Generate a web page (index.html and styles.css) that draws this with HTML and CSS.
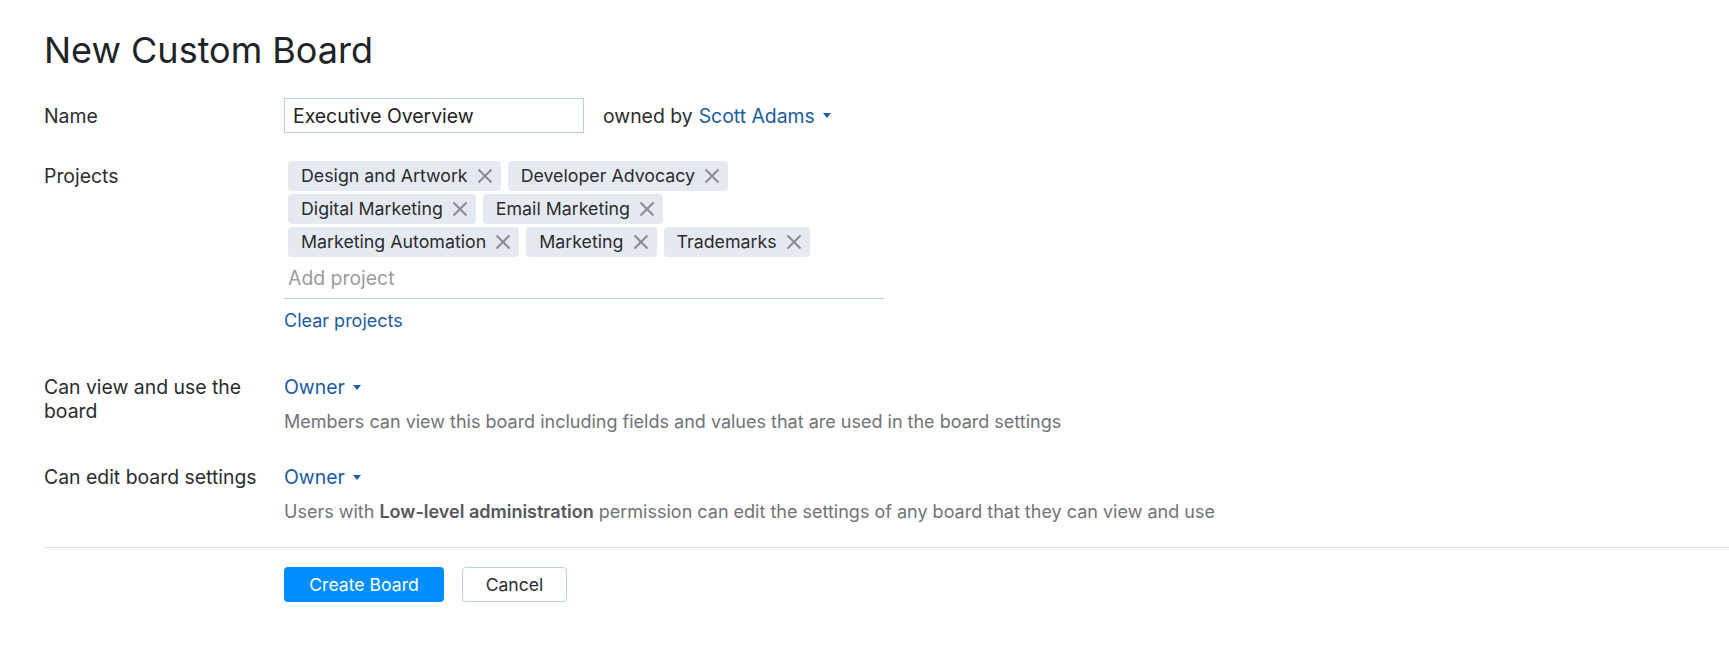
FILE: index.html
```html
<!DOCTYPE html>
<html lang="en">
<head>
    <meta charset="UTF-8">
    <meta name="viewport" content="width=device-width, initial-scale=1.0">
    <title>New Custom Board</title>
    <link rel="stylesheet" href="styles.css">
</head>
<body>

    <div class="page">
        <!-- Header -->
        <h1 class="title">New Custom Board</h1>

        <!-- Form -->
        <div class="form">
            <div class="row row-name">
                <div class="label">Name</div>
                <div class="field field-inline">
                    <input type="text" class="name-input" value="Executive Overview">
                    <span class="owned">owned by</span>
                    <a class="link dropdown">Scott Adams <span class="caret"></span></a>
                </div>
            </div>

            <div class="row row-projects">
                <div class="label">Projects</div>
                <div class="field">
                    <div class="tag-box">
                        <div class="tags">
                            <span class="tag">Design and Artwork <svg class="tag-x" viewBox="0 0 16 16"><path d="M1.5 1.5L14.5 14.5M14.5 1.5L1.5 14.5"/></svg></span>
                            <span class="tag">Developer Advocacy <svg class="tag-x" viewBox="0 0 16 16"><path d="M1.5 1.5L14.5 14.5M14.5 1.5L1.5 14.5"/></svg></span>
                            <span class="tag">Digital Marketing <svg class="tag-x" viewBox="0 0 16 16"><path d="M1.5 1.5L14.5 14.5M14.5 1.5L1.5 14.5"/></svg></span>
                            <span class="tag">Email Marketing <svg class="tag-x" viewBox="0 0 16 16"><path d="M1.5 1.5L14.5 14.5M14.5 1.5L1.5 14.5"/></svg></span>
                            <span class="tag">Marketing Automation <svg class="tag-x" viewBox="0 0 16 16"><path d="M1.5 1.5L14.5 14.5M14.5 1.5L1.5 14.5"/></svg></span>
                            <span class="tag">Marketing <svg class="tag-x" viewBox="0 0 16 16"><path d="M1.5 1.5L14.5 14.5M14.5 1.5L1.5 14.5"/></svg></span>
                            <span class="tag">Trademarks <svg class="tag-x" viewBox="0 0 16 16"><path d="M1.5 1.5L14.5 14.5M14.5 1.5L1.5 14.5"/></svg></span>
                        </div>
                        <input type="text" class="add-project" placeholder="Add project">
                    </div>
                    <a class="link clear-link">Clear projects</a>
                </div>
            </div>

            <div class="row row-view">
                <div class="label">Can view and use the board</div>
                <div class="field">
                    <a class="link dropdown">Owner <span class="caret"></span></a>
                    <div class="hint">Members can view this board including fields and values that are used in the board settings</div>
                </div>
            </div>

            <div class="row row-edit">
                <div class="label">Can edit board settings</div>
                <div class="field">
                    <a class="link dropdown">Owner <span class="caret"></span></a>
                    <div class="hint">Users with <b>Low-level administration</b> permission can edit the settings of any board that they can view and use</div>
                </div>
            </div>
        </div>

        <!-- Buttons -->
        <div class="actions">
            <button class="btn btn-primary">Create Board</button>
            <button class="btn btn-default">Cancel</button>
        </div>
    </div>

</body>
</html>
```

FILE: styles.css
```css
* {
    margin: 0;
    padding: 0;
    box-sizing: border-box;
    font-family: Inter, "Noto Sans", sans-serif;
}
body {
    background-color: #ffffff;
    color: #2a2c30;
    font-size: 19.4px;
    line-height: 24px;
}
.page {
    padding: 28px 0 0 44px;
}
.title {
    font-size: 36px;
    font-weight: 400;
    line-height: normal;
    color: #202327;
}
.form {
    padding-top: 26px;
}
.row {
    display: flex;
    align-items: flex-start;
}
.label {
    width: 240px;
    flex-shrink: 0;
    padding-right: 14px;
    color: #2a2c30;
}
.field {
    display: flex;
    flex-direction: column;
    align-items: flex-start;
}
.field-inline {
    flex-direction: row;
    align-items: center;
}
.row-name {
    align-items: center;
}
.name-input {
    width: 300px;
    height: 35px;
    padding: 0 8px;
    border: 1px solid #b8cfe3;
    font-size: 19.4px;
    color: #1f2226;
    outline: none;
}
.owned {
    margin-left: 19px;
    margin-right: 6px;
    color: #2a2c30;
}
.link {
    color: #1c5ca0;
    text-decoration: none;
    cursor: pointer;
}
.dropdown {
    display: inline-flex;
    align-items: center;
}
.caret {
    display: inline-block;
    width: 0;
    height: 0;
    margin-left: 8px;
    border-left: 4.5px solid transparent;
    border-right: 4.5px solid transparent;
    border-top: 5px solid #1c5ca0;
}
.row-projects {
    margin-top: 28px;
}
.row-projects .label {
    padding-top: 3px;
}
.tag-box {
    width: 600px;
    border-bottom: 1px solid #b9ccdc;
}
.tags {
    display: flex;
    flex-wrap: wrap;
    gap: 3px 7px;
    padding-left: 4px;
}
.tag {
    display: inline-flex;
    align-items: center;
    height: 30px;
    padding: 0 8px 0 13px;
    background-color: #e5e9f0;
    border-radius: 4px;
    color: #2a2c30;
    font-size: 17.8px;
    white-space: nowrap;
}
.tag-x {
    width: 16px;
    height: 16px;
    margin-left: 9px;
    fill: none;
    stroke: #8d8f93;
    stroke-width: 2.2;
}
.add-project {
    display: block;
    width: 100%;
    border: none;
    outline: none;
    padding: 9px 4px 8px;
    font-size: 19.4px;
    line-height: 24px;
    color: #2a2c30;
}
.add-project::placeholder {
    color: #9a9b9e;
}
.clear-link {
    margin-top: 10px;
    font-size: 18px;
}
.row-view {
    margin-top: 42px;
}
.row-edit {
    margin-top: 31px;
}
.hint {
    margin-top: 11px;
    color: #707378;
    font-size: 18px;
}
.hint b {
    color: #55585d;
    font-weight: 600;
}
.actions {
    display: flex;
    gap: 18px;
    margin-top: 23px;
    padding: 19px 0 0 240px;
    border-top: 1px solid #dfe3ea;
}
.btn {
    height: 35px;
    border-radius: 4px;
    font-size: 17.6px;
    cursor: pointer;
}
.btn-primary {
    width: 160px;
    background-color: #008eff;
    border: none;
    color: #ffffff;
}
.btn-primary:hover {
    background-color: #0080e6;
}
.btn-default {
    width: 105px;
    background-color: #ffffff;
    border: 1px solid #b9d0e6;
    color: #2a2c30;
}
```
